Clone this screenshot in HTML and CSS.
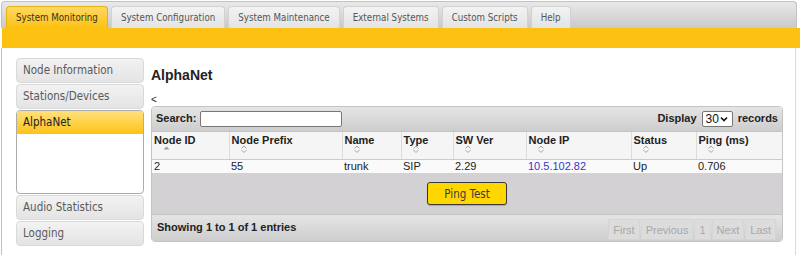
FILE: index.html
```html
<!DOCTYPE html>
<html lang="en">

<head>
    <meta charset="UTF-8">
    <title>System Monitoring</title>
    <link rel="stylesheet" href="styles.css">
</head>

<body>
    <div class="tabbar">
        <span class="tab active">System Monitoring</span>
        <span class="tab">System Configuration</span>
        <span class="tab">System Maintenance</span>
        <span class="tab">External Systems</span>
        <span class="tab">Custom Scripts</span>
        <span class="tab">Help</span>
    </div>
    <div class="band"></div>

    <div class="content">
        <div class="side">
            <div class="acc">Node Information</div>
            <div class="acc">Stations/Devices</div>
            <div class="open">
                <div class="head">AlphaNet</div>
            </div>
            <div class="acc">Audio Statistics</div>
            <div class="acc">Logging</div>
        </div>

        <div class="main">
            <h2>AlphaNet</h2>
            <div class="back">&lt;</div>

            <div class="grid">
                <div class="toolbar top">
                    <label class="search">Search: <input type="text"></label>
                    <label class="length">Display
                        <span class="pick">
                            <select>
                                <option>30</option>
                            </select>
                            <svg width="8" height="6" viewBox="0 0 8 6"><path d="M1 1.5 4 4.5 7 1.5" fill="none" stroke="#111" stroke-width="1.6"/></svg>
                        </span>
                        records</label>
                </div>

                <table>
                    <colgroup>
                        <col style="width:77px">
                        <col style="width:113px">
                        <col style="width:59px">
                        <col style="width:52px">
                        <col style="width:73px">
                        <col style="width:105px">
                        <col style="width:65px">
                        <col style="width:86px">
                    </colgroup>
                    <thead>
                        <tr>
                            <th><div class="lbl">Node ID</div>
                                <svg class="sort" width="16" height="8" viewBox="0 0 16 8"><path d="M5.5 4.5 8.5 1.5 11.5 4.5Z" fill="#999"/></svg></th>
                            <th><div class="lbl">Node Prefix</div>
                                <svg class="sort" width="16" height="8" viewBox="0 0 16 8"><path d="M5.5 3.5 8 1 10.5 3.5M5.5 5 8 7.5 10.5 5" fill="none" stroke="#a6a6a6"/></svg></th>
                            <th><div class="lbl">Name</div>
                                <svg class="sort" width="16" height="8" viewBox="0 0 16 8"><path d="M5.5 3.5 8 1 10.5 3.5M5.5 5 8 7.5 10.5 5" fill="none" stroke="#a6a6a6"/></svg></th>
                            <th><div class="lbl">Type</div>
                                <svg class="sort" width="16" height="8" viewBox="0 0 16 8"><path d="M5.5 3.5 8 1 10.5 3.5M5.5 5 8 7.5 10.5 5" fill="none" stroke="#a6a6a6"/></svg></th>
                            <th><div class="lbl">SW Ver</div>
                                <svg class="sort" width="16" height="8" viewBox="0 0 16 8"><path d="M5.5 3.5 8 1 10.5 3.5M5.5 5 8 7.5 10.5 5" fill="none" stroke="#a6a6a6"/></svg></th>
                            <th><div class="lbl">Node IP</div>
                                <svg class="sort" width="16" height="8" viewBox="0 0 16 8"><path d="M5.5 3.5 8 1 10.5 3.5M5.5 5 8 7.5 10.5 5" fill="none" stroke="#a6a6a6"/></svg></th>
                            <th><div class="lbl">Status</div>
                                <svg class="sort" width="16" height="8" viewBox="0 0 16 8"><path d="M5.5 3.5 8 1 10.5 3.5M5.5 5 8 7.5 10.5 5" fill="none" stroke="#a6a6a6"/></svg></th>
                            <th><div class="lbl">Ping (ms)</div>
                                <svg class="sort" width="16" height="8" viewBox="0 0 16 8"><path d="M5.5 3.5 8 1 10.5 3.5M5.5 5 8 7.5 10.5 5" fill="none" stroke="#a6a6a6"/></svg></th>
                        </tr>
                    </thead>
                    <tbody>
                        <tr>
                            <td>2</td>
                            <td>55</td>
                            <td>trunk</td>
                            <td>SIP</td>
                            <td>2.29</td>
                            <td><a href="#">10.5.102.82</a></td>
                            <td>Up</td>
                            <td>0.706</td>
                        </tr>
                    </tbody>
                </table>

                <div class="actions">
                    <button class="ping">Ping Test</button>
                </div>

                <div class="toolbar bottom">
                    <span class="info">Showing 1 to 1 of 1 entries</span>
                    <div class="pager">
                        <span>First</span>
                        <span>Previous</span>
                        <span>1</span>
                        <span>Next</span>
                        <span>Last</span>
                    </div>
                </div>
            </div>
        </div>
    </div>
</body>

</html>
```

FILE: styles.css
```css
body {
    margin: 0;
    background: #fff;
    font-family: "Liberation Sans", Arial, sans-serif;
    color: #222;
    overflow: hidden;
}

/* top tabs */
.tabbar {
    margin: 1px 3px 0 1px;
    height: 27px;
    box-sizing: border-box;
    border: 1px solid #c2c2c2;
    border-bottom: 0;
    border-radius: 4px 4px 0 0;
    background: linear-gradient(#e9e9e9, #c9c9c9);
    padding: 4px 0 0 4px;
    display: flex;
    align-items: flex-end;
    gap: 3px;
}

.tab {
    height: 22px;
    box-sizing: border-box;
    padding: 0 9px;
    border: 1px solid #d2d2d2;
    border-bottom: 0;
    border-radius: 4px 4px 0 0;
    background: linear-gradient(#f3f3f3, #e3e3e3);
    color: #555;
    font-family: "DejaVu Sans Condensed", "DejaVu Sans", sans-serif;
    font-stretch: condensed;
    font-size: 9.7px;
    line-height: 21px;
    white-space: nowrap;
}

.tab.active {
    background: linear-gradient(#fed863, #fcc112);
    border-color: #e6b212;
    color: #38351a;
}

.band {
    height: 20px;
    margin-left: 2px;
    background: #fdc112;
}

.content {
    margin-left: 1px;
    width: 795px;
    height: 207px;
    box-sizing: border-box;
    border-left: 1px solid #c0c0c0;
    border-right: 1px solid #dadada;
    padding: 10px 12px 0 14px;
    display: flex;
    gap: 7px;
}

/* left accordion */
.side {
    width: 128px;
    flex: none;
    font-family: "DejaVu Sans Condensed", "DejaVu Sans", sans-serif;
    font-stretch: condensed;
    font-size: 11.5px;
}

.acc {
    height: 25px;
    box-sizing: border-box;
    border: 1px solid #d9d9d9;
    border-radius: 4px;
    background: linear-gradient(#f2f2f2, #e4e4e4);
    color: #5a5a5a;
    padding-left: 6px;
    line-height: 23px;
    margin-bottom: 1px;
}

.open {
    height: 84px;
    box-sizing: border-box;
    border: 1px solid #acacac;
    border-radius: 4px;
    margin: 1px 0;
    background: #fff;
    overflow: hidden;
}

.open .head {
    height: 23px;
    background: linear-gradient(#ffe07c, #fdc315);
    color: #222;
    padding-left: 6px;
    line-height: 23px;
}

/* main */
.main {
    flex: 1;
    min-width: 0;
}

.main h2 {
    margin: 9px 0 0;
    font-size: 14px;
    line-height: 16px;
    font-weight: bold;
    color: #222;
}

.back {
    margin-top: 10px;
    font-size: 10px;
    line-height: 13px;
}

.grid {
    border: 1px solid #c4c4c4;
    border-radius: 4px;
    overflow: hidden;
    font-size: 11px;
}

.toolbar {
    display: flex;
    align-items: center;
    justify-content: space-between;
    background: linear-gradient(#e5e5e5, #cdcdcd);
    font-weight: bold;
    color: #222;
}

.toolbar.top {
    height: 24px;
    border-bottom: 1px solid #c4c4c4;
    padding: 0 4px 0 4px;
}

.search input {
    width: 142px;
    height: 16px;
    box-sizing: border-box;
    margin: 0 0 0 1px;
    border: 1px solid #767676;
    border-radius: 2px;
    padding: 0 2px;
    vertical-align: middle;
}

.pick {
    position: relative;
    display: inline-block;
    vertical-align: middle;
    margin: 0 2px;
}

.pick select {
    display: block;
    width: 31px;
    height: 16px;
    margin: 0;
    padding: 0 0 0 3px;
    border: 1px solid #767676;
    border-radius: 2px;
    font: 12px "Liberation Sans", Arial, sans-serif;
    color: #111;
    background: #fff;
    appearance: none;
    -webkit-appearance: none;
}

.pick svg {
    position: absolute;
    right: 5px;
    top: 5px;
    pointer-events: none;
}

table {
    width: 630px;
    table-layout: fixed;
    border-collapse: collapse;
}

th {
    height: 27px;
    box-sizing: border-box;
    padding: 2px 2px 0;
    vertical-align: top;
    text-align: left;
    background: #f5f5f5;
    border-right: 1px solid #dcdcdc;
    border-bottom: 1px solid #cbcbcb;
    font-weight: bold;
}

th:last-child {
    border-right: 0;
}

.lbl {
    line-height: 12px;
}

.sort {
    display: block;
    margin: -1px 0 0 4px;
}

td {
    height: 13px;
    padding: 0 2px;
    line-height: 13px;
    background: #fafafa;
    color: #222;
}

td a {
    color: #3434cc;
    text-decoration: none;
}

.actions {
    height: 41px;
    background: #d3d1d3;
    display: flex;
    align-items: center;
    justify-content: center;
}

.ping {
    width: 80px;
    height: 23px;
    margin-top: 1px;
    border: 1px solid #3a3a3a;
    border-radius: 3px;
    background: #ffd600;
    color: #3a3a3a;
    font-family: "DejaVu Sans Condensed", "DejaVu Sans", sans-serif;
    font-stretch: condensed;
    font-size: 11.5px;
    box-shadow: 0 1px 1px rgba(0, 0, 0, 0.2);
}

.toolbar.bottom {
    height: 26px;
    border-top: 1px solid #c4c4c4;
    padding: 0 6px 0 5px;
    align-items: stretch;
}

.info {
    align-self: center;
    margin-top: -2px;
}

.pager {
    display: flex;
    align-self: flex-end;
    gap: 1px;
    margin-bottom: 1px;
    font-weight: normal;
}

.pager span {
    height: 21px;
    box-sizing: border-box;
    padding: 0 4px;
    line-height: 21px;
    background: #dcdcdc;
    border: 1px solid #d5d5d5;
    color: #a8a8a8;
}
```
